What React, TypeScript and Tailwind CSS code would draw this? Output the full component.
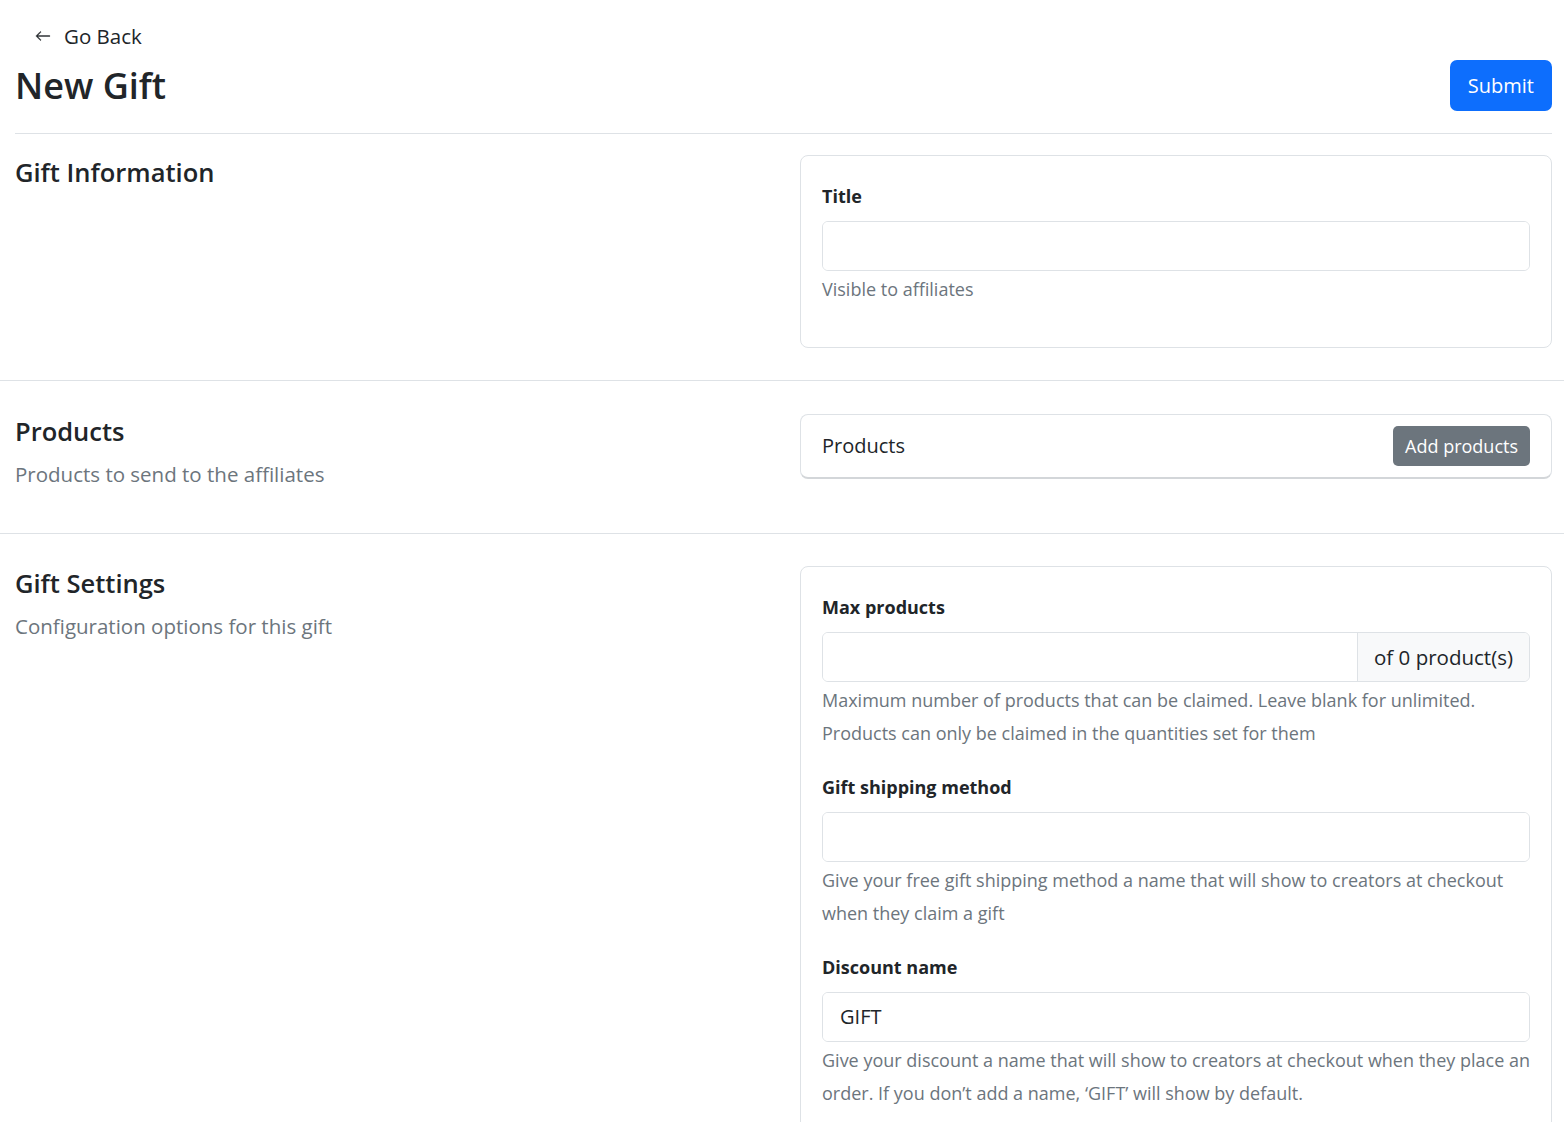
export default function App() {
  const font = { fontFamily: '"Open Sans", "Noto Sans", sans-serif' }
  return (
    <div className="min-h-screen bg-white text-[#212529]" style={font}>
      {/* Header */}
      <div className="ml-[15px] mr-[12px] pt-[20px] border-b border-[#dee2e6] pb-[22px]">
        <a href="#" className="flex items-center h-[32px] pl-[20px] gap-[13px] text-[20.5px] text-[#212529]">
          <svg width="16" height="16" viewBox="0 0 16 16" fill="currentColor" stroke="currentColor" strokeWidth="0.4">
            <path
              fillRule="evenodd"
              d="M15 8a.5.5 0 0 0-.5-.5H2.707l3.147-3.146a.5.5 0 1 0-.708-.708l-4 4a.5.5 0 0 0 0 .708l4 4a.5.5 0 0 0 .708-.708L2.707 8.5H14.5A.5.5 0 0 0 15 8z"
            />
          </svg>
          Go Back
        </a>
        <div className="mt-[8px] flex items-center justify-between h-[51px]">
          <h1 className="text-[36px] leading-[44px] font-semibold">New Gift</h1>
          <button className="h-[51px] px-[18px] rounded-[7px] bg-[#0d6efd] text-white text-[20px]">Submit</button>
        </div>
      </div>

      {/* Gift Information */}
      <section className="grid grid-cols-2 gap-x-[33px] pl-[15px] pr-[12px] pt-[21px] pb-[32px] border-b border-[#dee2e6] items-start">
        <div>
          <h4 className="text-[25.5px] leading-[34px] font-semibold">Gift Information</h4>
        </div>
        <div className="border border-[#dee2e6] rounded-[8px] px-[21px] pt-[26px] pb-[41px]">
          <Field label="Title" help={["Visible to affiliates"]} />
        </div>
      </section>

      {/* Products */}
      <section className="grid grid-cols-2 gap-x-[33px] pl-[15px] pr-[12px] pt-[33px] pb-[44px] border-b border-[#dee2e6] items-start">
        <div>
          <h4 className="text-[25.5px] leading-[34px] font-semibold">Products</h4>
          <p className="mt-[11px] text-[20.5px] leading-[30px] text-[#6c757d]">Products to send to the affiliates</p>
        </div>
        <div className="border border-[#dee2e6] border-b-2 border-b-[#d3d6d9] rounded-[8px] h-[65px] flex items-center justify-between pl-[21px] pr-[21px]">
          <span className="text-[20px]">Products</span>
          <button className="h-[40px] px-[12px] rounded-[5px] bg-[#6c757d] text-white text-[18px]">Add products</button>
        </div>
      </section>

      {/* Gift Settings */}
      <section className="grid grid-cols-2 gap-x-[33px] pl-[15px] pr-[12px] pt-[32px] pb-[40px] items-start">
        <div>
          <h4 className="text-[25.5px] leading-[34px] font-semibold">Gift Settings</h4>
          <p className="mt-[11px] text-[20.5px] leading-[30px] text-[#6c757d]">Configuration options for this gift</p>
        </div>
        <div className="border border-[#dee2e6] rounded-[8px] px-[21px] pt-[26px] pb-[41px] flex flex-col gap-[23px]">
          <Field
            label="Max products"
            addon="of 0 product(s)"
            help={[
              "Maximum number of products that can be claimed. Leave blank for unlimited.",
              "Products can only be claimed in the quantities set for them",
            ]}
          />
          <Field
            label="Gift shipping method"
            help={["Give your free gift shipping method a name that will show to creators at checkout when they claim a gift"]}
          />
          <Field
            label="Discount name"
            value="GIFT"
            help={["Give your discount a name that will show to creators at checkout when they place an order. If you don’t add a name, ‘GIFT’ will show by default."]}
          />
        </div>
      </section>
    </div>
  )
}

function Field({ label, help, addon, value }: { label: string; help: string[]; addon?: string; value?: string }) {
  return (
    <div>
      <label className="block text-[18px] leading-[27px] font-bold mt-[0.5px] mb-[11.5px]">{label}</label>
      <div className="flex h-[50px] border border-[#dee2e6] rounded-[6px] overflow-hidden">
        <input
          defaultValue={value}
          className="flex-1 min-w-0 px-[17px] text-[20px] text-[#212529] outline-none bg-white"
        />
        {addon && (
          <span className="flex items-center px-[16px] bg-[#f8f9fa] border-l border-[#dee2e6] text-[20.5px]">{addon}</span>
        )}
      </div>
      <div className="mt-[2px]">
        {help.map((h) => (
          <p key={h} className="text-[18px] leading-[33px] text-[#6c757d]">
            {h}
          </p>
        ))}
      </div>
    </div>
  )
}
